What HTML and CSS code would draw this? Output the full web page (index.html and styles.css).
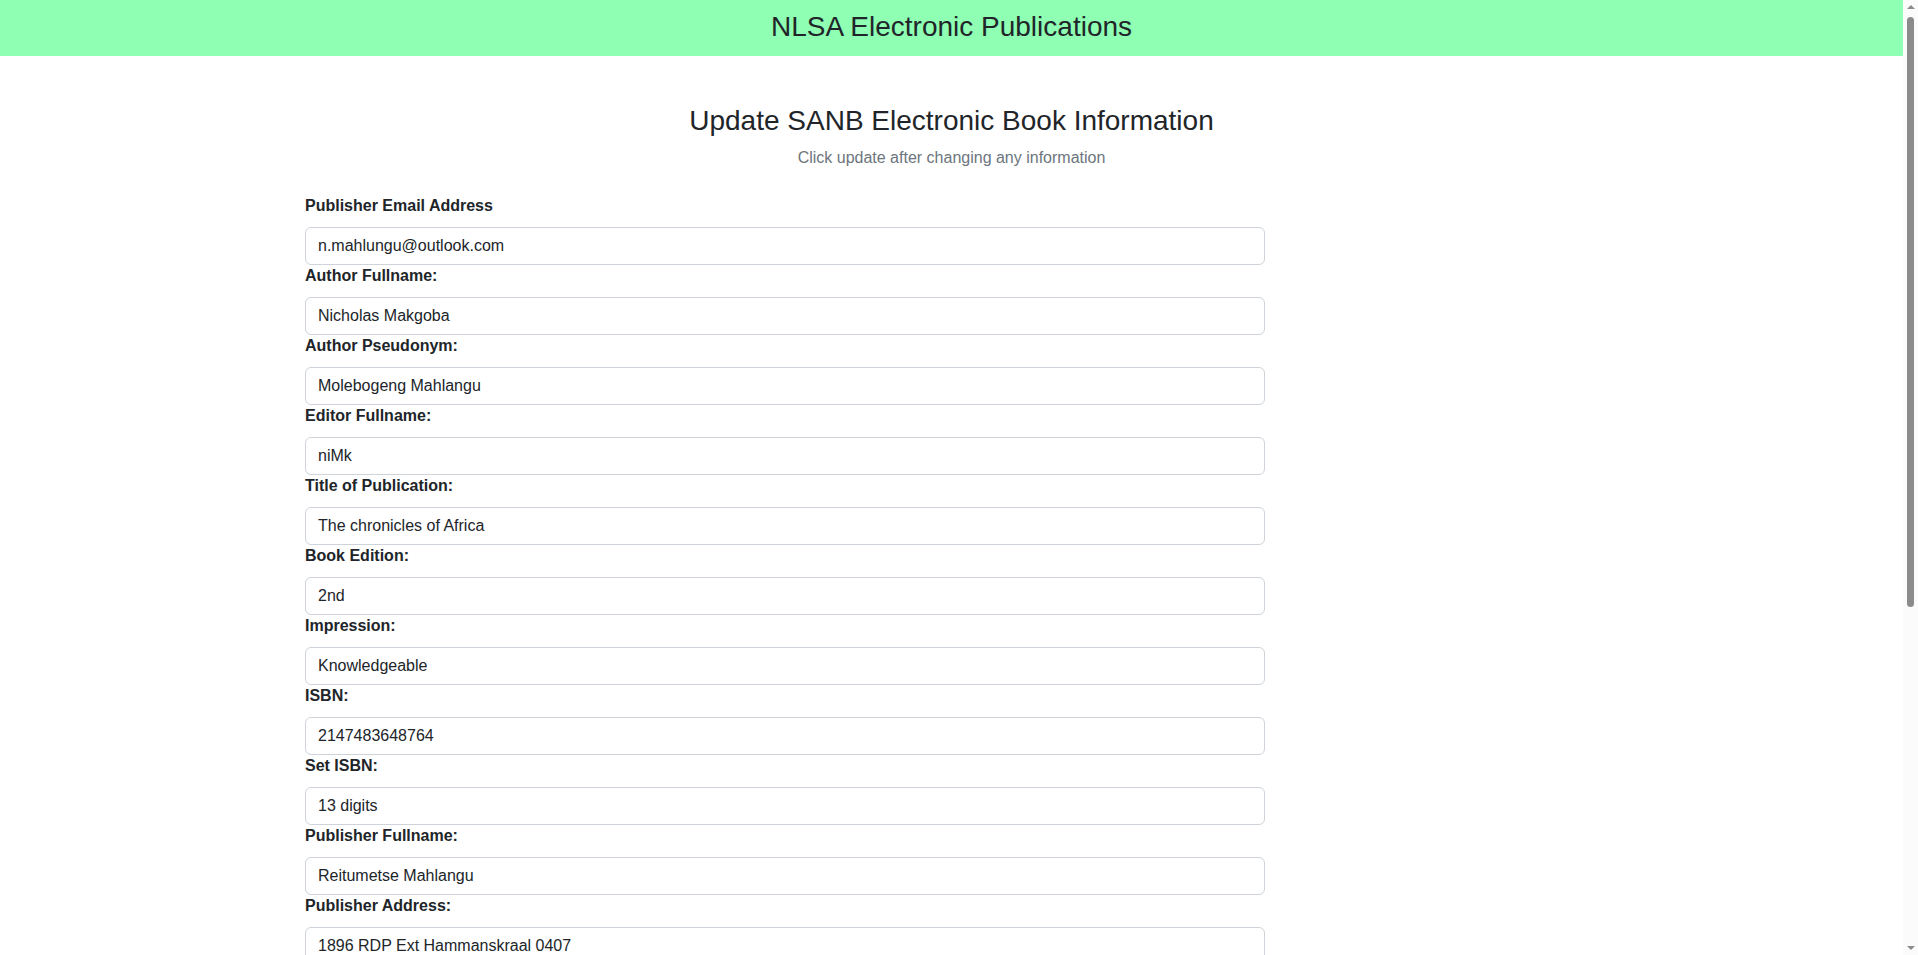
FILE: index.html
```html
<!DOCTYPE html>
<html lang="en">
<head>
<meta charset="utf-8">
<title>NLSA Electronic Publications</title>
<link rel="stylesheet" href="styles.css">
</head>
<body>
<header class="topbar">
  <h1 class="brand">NLSA Electronic Publications</h1>
</header>
<main class="page">
  <div class="intro">
    <h2 class="title">Update SANB Electronic Book Information</h2>
    <p class="subtitle">Click update after changing any information</p>
  </div>
  <form class="form">
    <label class="label">Publisher Email Address</label>
    <input class="field" type="text" value="n.mahlungu@outlook.com">
    <label class="label">Author Fullname:</label>
    <input class="field" type="text" value="Nicholas Makgoba">
    <label class="label">Author Pseudonym:</label>
    <input class="field" type="text" value="Molebogeng Mahlangu">
    <label class="label">Editor Fullname:</label>
    <input class="field" type="text" value="niMk">
    <label class="label">Title of Publication:</label>
    <input class="field" type="text" value="The chronicles of Africa">
    <label class="label">Book Edition:</label>
    <input class="field" type="text" value="2nd">
    <label class="label">Impression:</label>
    <input class="field" type="text" value="Knowledgeable">
    <label class="label">ISBN:</label>
    <input class="field" type="text" value="2147483648764">
    <label class="label">Set ISBN:</label>
    <input class="field" type="text" value="13 digits">
    <label class="label">Publisher Fullname:</label>
    <input class="field" type="text" value="Reitumetse Mahlangu">
    <label class="label">Publisher Address:</label>
    <input class="field" type="text" value="1896 RDP Ext Hammanskraal 0407">
    <label class="label">Publisher Contact Number:</label>
    <input class="field" type="text" value="0712345678">
    <label class="label">Year of Publication:</label>
    <input class="field" type="text" value="2021">
    <label class="label">Place of Publication:</label>
    <input class="field" type="text" value="Pretoria">
    <label class="label">Language:</label>
    <input class="field" type="text" value="English">
    <label class="label">Genre:</label>
    <input class="field" type="text" value="History">
    <div class="actions">
      <button class="btn" type="button">Update</button>
    </div>
  </form>
</main>
<div class="scrollbar" aria-hidden="true">
  <span class="arrow arrow-up"></span>
  <span class="thumb"></span>
  <span class="arrow arrow-down"></span>
</div>
</body>
</html>
```

FILE: styles.css
```css
html, body {
  margin: 0;
  padding: 0;
}
body {
  font-family: "Liberation Sans", Arial, sans-serif;
  font-size: 16px;
  line-height: 1.5;
  color: #212529;
  background: #fff;
  padding-right: 15px;
}
.topbar {
  background: #8effb3;
  height: 56px;
  display: flex;
  align-items: center;
  justify-content: center;
}
.brand {
  margin: 0 0 2px 0;
  font-size: 28px;
  font-weight: 400;
  line-height: 1.2;
}
.page {
  padding: 48px 0 40px;
}
.intro {
  text-align: center;
}
.title {
  margin: 0 0 8px;
  font-size: 28px;
  font-weight: 400;
  line-height: 1.2;
}
.subtitle {
  margin: 0 0 24px;
  color: #6c757d;
}
.form {
  width: 960px;
  margin-left: 305px;
  display: flex;
  flex-direction: column;
}
.label {
  display: block;
  font-weight: 700;
  margin-bottom: 9px;
}
.field {
  box-sizing: border-box;
  display: block;
  width: 100%;
  height: 38px;
  padding: 6px 12px;
  font-family: inherit;
  font-size: 16px;
  line-height: 1.5;
  color: #212529;
  background: #fff;
  border: 1px solid #ced4da;
  border-radius: 6px;
  margin: 0 0 -1px;
}
.actions {
  margin-top: 16px;
}
.btn {
  font-family: inherit;
  font-size: 16px;
  line-height: 1.5;
  padding: 6px 12px;
  color: #fff;
  background: #0d6efd;
  border: 1px solid #0d6efd;
  border-radius: 6px;
}

/* browser scrollbar, drawn over the right edge */
.scrollbar {
  position: fixed;
  top: 0;
  right: 0;
  width: 15px;
  height: 100%;
  background: #fbfbfb;
}
.thumb {
  position: absolute;
  left: 4px;
  top: 17px;
  width: 7px;
  height: 590px;
  border-radius: 4px;
  background: #8b8b8b;
}
.arrow {
  position: absolute;
  left: 4px;
  width: 0;
  height: 0;
  border-left: 4px solid transparent;
  border-right: 4px solid transparent;
}
.arrow-up {
  top: 5px;
  border-bottom: 4px solid #8b8b8b;
}
.arrow-down {
  bottom: 5px;
  border-top: 4px solid #8b8b8b;
}
```
